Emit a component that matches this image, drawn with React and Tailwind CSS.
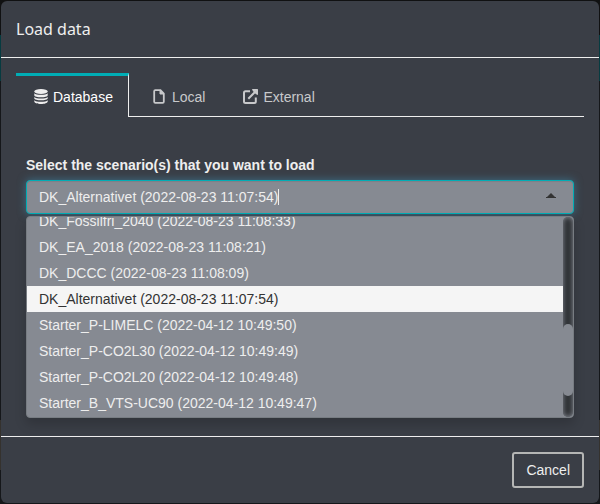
const scenarios = [
  'DK_Fossilfri_2040 (2022-08-23 11:08:33)',
  'DK_EA_2018 (2022-08-23 11:08:21)',
  'DK_DCCC (2022-08-23 11:08:09)',
  'DK_Alternativet (2022-08-23 11:07:54)',
  'Starter_P-LIMELC (2022-04-12 10:49:50)',
  'Starter_P-CO2L30 (2022-04-12 10:49:49)',
  'Starter_P-CO2L20 (2022-04-12 10:49:48)',
  'Starter_B_VTS-UC90 (2022-04-12 10:49:47)',
];
const selected = scenarios[3];

function DatabaseIcon() {
  return (
    <svg viewBox="0 0 14 15" className="h-[15px] w-[14px] fill-[#eeeeee]" aria-hidden="true">
      <ellipse cx="7" cy="2.5" rx="6.7" ry="2.5" />
      <path d="M.3 4.3C2 6.3 12 6.3 13.7 4.3V6.2C13.7 8.9.3 8.9.3 6.2ZM.3 8C2 10 12 10 13.7 8V9.3C13.7 12 .3 12 .3 9.3ZM.3 11.2C2 13.2 12 13.2 13.7 11.2V12.4C13.7 15.7.3 15.7.3 12.4Z" />
    </svg>
  );
}

function FileIcon() {
  return (
    <svg viewBox="0 0 12 15" className="h-[15px] w-3" fill="none" stroke="currentColor" strokeWidth="1.8" aria-hidden="true">
      <path d="M7.5 1.2H2.3Q1.2 1.2 1.2 2.3V12.7Q1.2 13.8 2.3 13.8H9.7Q10.8 13.8 10.8 12.7V4.5Z" />
      <path d="M7 1.5V5H10.5Z" fill="currentColor" strokeWidth="1" />
    </svg>
  );
}

function ExternalIcon() {
  return (
    <svg viewBox="0 0 15 15" className="h-[15px] w-[15px]" fill="none" stroke="currentColor" strokeWidth="2" aria-hidden="true">
      <path d="M7 2.2H2.5Q1 2.2 1 3.7V12.5Q1 14 2.5 14H11.3Q12.8 14 12.8 12.5V8.5M5.3 9.7L12 3" />
      <path d="M9 0H14.5Q15 0 15 .5V6L13 5.2L9.8 2Z" fill="currentColor" stroke="none" />
    </svg>
  );
}

function Tabs() {
  return (
    <div role="tablist" className="flex leading-5">
      <button
        type="button"
        role="tab"
        aria-selected="true"
        className="flex h-11 items-center gap-[5px] border-t-3 border-r border-t-[#00adb5] border-r-[#eeeeee] pr-[15px] pl-[18px] text-white"
      >
        <DatabaseIcon />
        Database
      </button>
      <div className="flex flex-1 border-b border-[#eeeeee] pt-1 text-[#c8c9cb]">
        <button type="button" role="tab" aria-selected="false" className="flex items-center gap-[7px] pr-4 pl-6">
          <FileIcon />
          Local
        </button>
        <button type="button" role="tab" aria-selected="false" className="flex items-center gap-[5px] pr-4 pl-[22px]">
          <ExternalIcon />
          External
        </button>
      </div>
    </div>
  );
}

function ScenarioSelect() {
  return (
    <div className="px-[10px] pt-[38px] pb-[18px]">
      <label htmlFor="scenario" className="mb-[5px] block leading-5 font-bold text-[#eeeeee]">
        Select the scenario(s) that you want to load
      </label>
      <div className="flex h-[34px] items-center rounded-sm border border-[#00adb5] bg-[#868a92] pr-[17px] pl-3 shadow-[inset_0_1px_1px_rgba(0,0,0,0.075),0_0_8px_rgba(60,145,180,0.6)]">
        <input
          id="scenario"
          role="combobox"
          aria-expanded="true"
          aria-controls="scenario-list"
          defaultValue={selected}
          className="bg-transparent leading-5 text-[#eeeeee] caret-transparent outline-none [field-sizing:content]"
        />
        <span className="h-4 w-px bg-[#eeeeee]" />
        <svg viewBox="0 0 10 5" className="mb-[3px] ml-auto h-[5px] w-[10px] fill-[#333333]" aria-hidden="true">
          <path d="M0 5V4L1 4L5 0L9 4L10 4V5Z" />
        </svg>
      </div>
      <div className="mt-[2px] flex h-[202px] overflow-hidden rounded-sm border border-[#777c82] bg-[#868a92] shadow-[0_6px_12px_rgba(0,0,0,0.175)]">
        <ul id="scenario-list" role="listbox" className="flex flex-1 flex-col justify-end overflow-hidden pb-px">
          {scenarios.map((name) => (
            <li
              key={name}
              role="option"
              aria-selected={name === selected}
              className="shrink-0 px-3 py-[3px] leading-5 text-[#eeeeee] aria-selected:bg-[#f5f5f5] aria-selected:text-[#333333]"
            >
              {name}
            </li>
          ))}
        </ul>
        <div className="flex w-[10px] flex-col rounded-[5px] bg-[#2f3236] pt-[107px] shadow-[inset_0_0_5px_#868a92]">
          <div className="h-[72px] rounded-[5px] bg-[#868a92]" />
        </div>
      </div>
    </div>
  );
}

export default function App() {
  return (
    <main className="min-h-screen bg-[#111214] bg-[linear-gradient(#101112_35px,#063b40_35px_81px,#15171a_81px_420px,#35322e_420px_470px,#15171a_470px)] p-px font-['Liberation_Sans',Arial,sans-serif] text-[14px]">
      <section role="dialog" aria-labelledby="dialog-title" className="rounded-md bg-[#3a3e46]">
        <header className="border-b border-[#eeeeee] px-[15px] pt-4 pb-[15px]">
          <h1 id="dialog-title" className="font-['Noto_Sans',sans-serif] text-[16px] leading-[25px] text-[#eeeeee]">
            Load data
          </h1>
        </header>
        <div className="p-[15px] pb-0">
          <Tabs />
          <ScenarioSelect />
        </div>
        <footer className="flex justify-end border-t border-[#eeeeee] p-[15px]">
          <button
            type="button"
            className="rounded-[3px] border-2 border-[#b5b6b5] px-3 py-[6px] leading-5 text-[#eeeeee]"
          >
            Cancel
          </button>
        </footer>
      </section>
    </main>
  );
}
